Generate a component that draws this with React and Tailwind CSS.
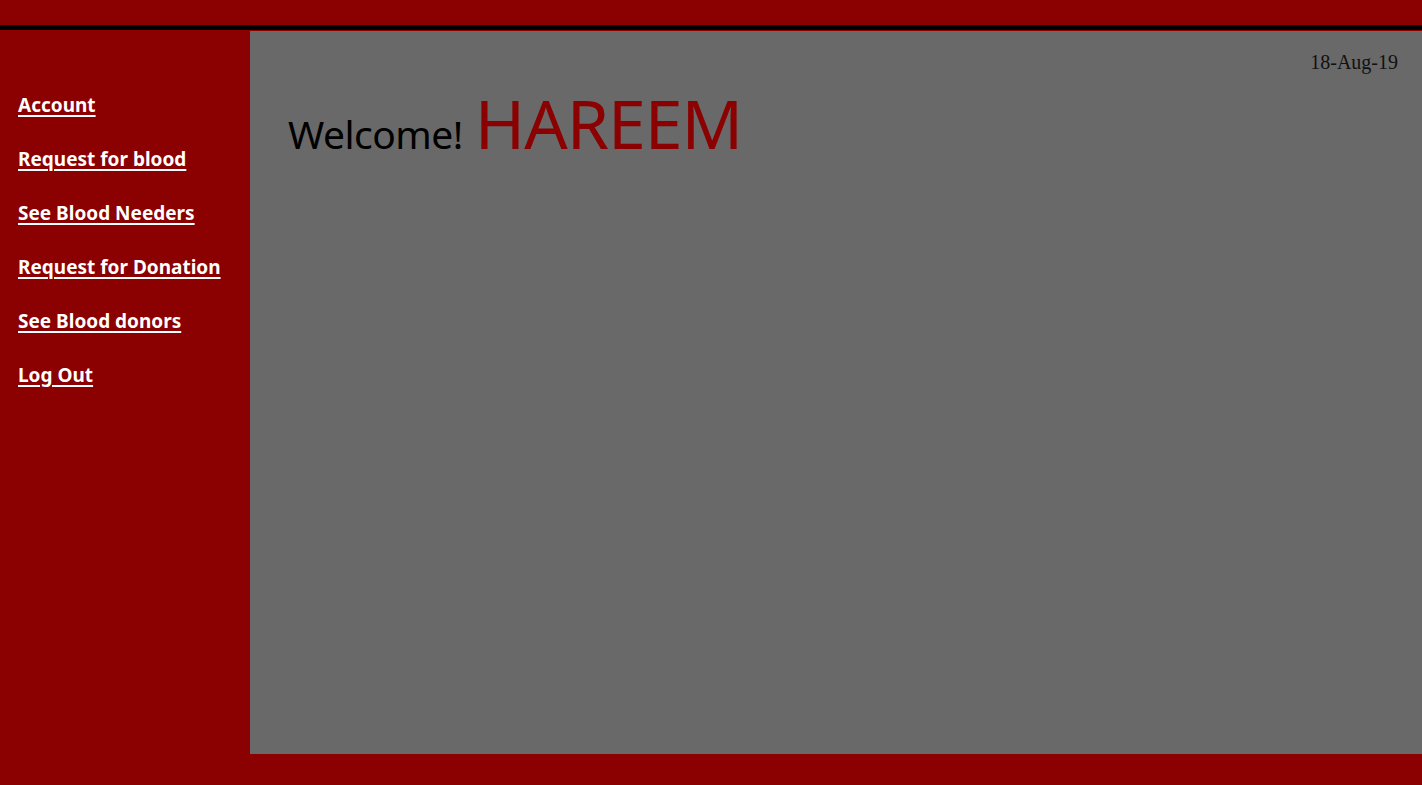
import React from "react";

const links = [
  "Account",
  "Request for blood",
  "See Blood Needers",
  "Request for Donation",
  "See Blood donors",
  "Log Out",
];

export default function App() {
  return (
    <div className="h-[785px] w-full bg-[#8b0000] flex flex-col font-['Noto_Sans',sans-serif] overflow-hidden">
      {/* header */}
      <div className="h-[30px] shrink-0 border-b-[5px] border-black bg-[#8b0000]" />

      <div className="flex flex-1 min-h-0">
        {/* sidebar */}
        <nav className="w-[250px] shrink-0 bg-[#8b0000] pt-[61px] pl-[18px] flex flex-col gap-[26px]">
          {links.map((l) => (
            <a
              key={l}
              href="#"
              className="text-white font-bold text-[19px] leading-[28px] underline underline-offset-[3px] decoration-2 w-fit"
            >
              {l}
            </a>
          ))}
        </nav>

        {/* main */}
        <main className="flex-1 mt-px bg-[#696969]">
          <div className="flex justify-end pr-[24px] pt-[16px]">
            <span className="font-['Liberation_Serif',serif] text-[20px] text-[#111]">18-Aug-19</span>
          </div>
          <div className="pl-[38px] mt-[6px] flex items-baseline">
            <span className="text-[39px] text-black tracking-[-0.5px]">Welcome!</span>
            <span className="text-[68px] text-[#8b0000] ml-[12px] leading-[80px] tracking-[-1px]">HAREEM</span>
          </div>
        </main>
      </div>

      {/* footer */}
      <div className="h-[31px] shrink-0 bg-[#8b0000]" />
    </div>
  );
}
